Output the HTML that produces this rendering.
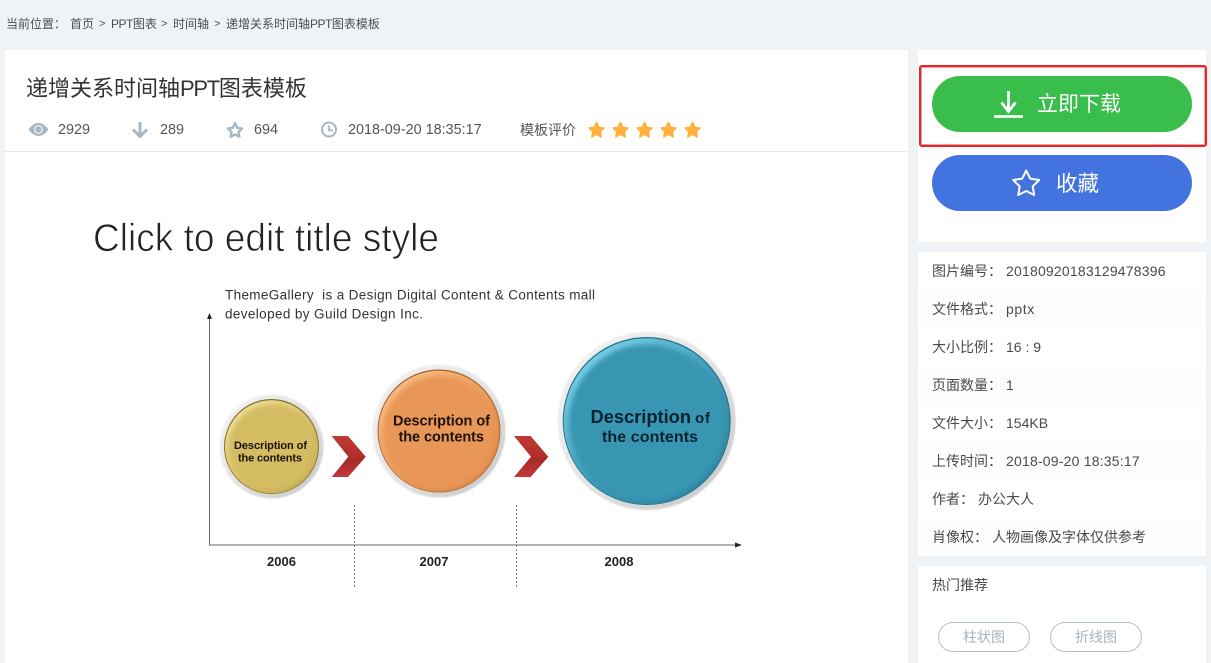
<!DOCTYPE html>
<html lang="zh"><head><meta charset="utf-8">
<style>
*{margin:0;padding:0;box-sizing:border-box}
html,body{width:1211px;height:663px;overflow:hidden;background:#eff3f6;font-family:"Liberation Sans","Noto Sans CJK SC",sans-serif;color:#444}
.a{position:absolute;white-space:nowrap}
.card{position:absolute;background:#fff}
.row{position:absolute;left:918px;width:288px;height:38px;line-height:38px;font-size:14px;color:#4a4a4a;white-space:nowrap}
.row span{position:absolute;top:0}
.tag{position:absolute;top:622px;width:92px;height:30px;border:1px solid #b4c2ca;border-radius:15px;text-align:center;line-height:28px;font-size:14px;color:#a9b3b9}
.bc{top:16px;font-size:12px;line-height:16px;color:#4d4d4d}
.m{top:119.500px;font-size:14.400px;line-height:20px;color:#555}
.n{letter-spacing:-.5px}
</style></head><body>
<div class="a bc" style="left:6px">当前位置：</div>
<div class="a bc" style="left:70px">首页</div>
<div class="a bc" style="left:99px;font-size:11px">&gt;</div>
<div class="a bc" style="left:111px"><span class="n">PPT</span>图表</div>
<div class="a bc" style="left:161px;font-size:11px">&gt;</div>
<div class="a bc" style="left:173px">时间轴</div>
<div class="a bc" style="left:214px;font-size:11px">&gt;</div>
<div class="a bc" style="left:226px">递增关系时间轴<span class="n">PPT</span>图表模板</div>

<div class="card" style="left:5px;top:50px;width:903px;height:613px"></div>
<div class="a" style="left:26px;top:74px;font-size:22px;line-height:30px;color:#333">递增关系时间轴<span style="letter-spacing:-1.300px">PPT</span>图表模板</div>
<div class="a" style="left:5px;top:151px;width:903px;height:1px;background:#e8ebee"></div>

<svg class="a" style="left:0;top:115px" width="720" height="30" viewBox="0 115 720 30">
<path d="M28.500 129.500C32 125 35 123 38.500 123C42 123 45 125 48.500 129.500C45 134 42 136 38.500 136C35 136 32 134 28.500 129.500Z" fill="#a6b7c4"/>
<circle cx="38.500" cy="129.500" r="4.500" fill="#fff" opacity=".85"/><circle cx="38.500" cy="129.500" r="3.200" fill="#a6b7c4"/>
<path d="M140 122V136M133 129.500L140 136.500L147 129.500" fill="none" stroke="#a6b7c4" stroke-width="3"/>
<path d="M235 123L237.200 127.800L242 128.500L238.500 132L239.400 136.800L235 134.500L230.600 136.800L231.500 132L228 128.500L232.800 127.800Z" fill="none" stroke="#a6b7c4" stroke-width="2.400" stroke-linejoin="round"/>
<circle cx="329" cy="129.500" r="7" fill="none" stroke="#a6b7c4" stroke-width="2"/>
<path d="M329 125.500V130.400H333" fill="none" stroke="#a6b7c4" stroke-width="1.800"/>
<g fill="#ffb03b" stroke="#ffb03b" stroke-width="1.600" stroke-linejoin="round">
<path d="M596.500 122.500L598.800 127.400L603.800 128L600.100 131.600L601.200 136.800L596.500 134.200L591.800 136.800L592.900 131.600L589.200 128L594.200 127.400Z"/>
<path transform="translate(24 0)" d="M596.500 122.500L598.800 127.400L603.800 128L600.100 131.600L601.200 136.800L596.500 134.200L591.800 136.800L592.900 131.600L589.200 128L594.200 127.400Z"/>
<path transform="translate(48 0)" d="M596.500 122.500L598.800 127.400L603.800 128L600.100 131.600L601.200 136.800L596.500 134.200L591.800 136.800L592.900 131.600L589.200 128L594.200 127.400Z"/>
<path transform="translate(72 0)" d="M596.500 122.500L598.800 127.400L603.800 128L600.100 131.600L601.200 136.800L596.500 134.200L591.800 136.800L592.900 131.600L589.200 128L594.200 127.400Z"/>
<path transform="translate(96 0)" d="M596.500 122.500L598.800 127.400L603.800 128L600.100 131.600L601.200 136.800L596.500 134.200L591.800 136.800L592.900 131.600L589.200 128L594.200 127.400Z"/>
</g></svg>
<div class="a m" style="left:58px">2929</div>
<div class="a m" style="left:160px">289</div>
<div class="a m" style="left:254px">694</div>
<div class="a m" style="left:348px">2018-09-20 18:35:17</div>
<div class="a" style="left:520px;top:120px;font-size:14px;line-height:20px;color:#555">模板评价</div>

<svg class="a" style="left:0;top:0" width="908" height="663" viewBox="0 0 908 663" font-family="Liberation Sans, sans-serif">
<defs>
<filter id="bl" x="-20%" y="-20%" width="140%" height="140%"><feGaussianBlur stdDeviation="2.500"/></filter>
<filter id="bs" x="-20%" y="-20%" width="140%" height="140%"><feGaussianBlur stdDeviation=".8"/></filter>
<linearGradient id="ring" x1="0" y1="0" x2="1" y2="1"><stop offset="0" stop-color="#f4f4f4"/><stop offset=".55" stop-color="#e2e2e2"/><stop offset="1" stop-color="#c4c4c4"/></linearGradient>
<linearGradient id="yc" x1=".15" y1=".1" x2=".85" y2=".9"><stop offset="0" stop-color="#f0e096"/><stop offset=".55" stop-color="#d6bf68"/><stop offset="1" stop-color="#c4ab52"/></linearGradient>
<linearGradient id="oc" x1=".15" y1=".1" x2=".85" y2=".9"><stop offset="0" stop-color="#f9bd84"/><stop offset=".55" stop-color="#ea9a5a"/><stop offset="1" stop-color="#d98443"/></linearGradient>
<linearGradient id="bc" x1=".15" y1=".1" x2=".85" y2=".9"><stop offset="0" stop-color="#79d0e8"/><stop offset=".55" stop-color="#3e9ab7"/><stop offset="1" stop-color="#2d84a0"/></linearGradient>
<linearGradient id="chev" x1="0" y1="0" x2="0" y2="1"><stop offset="0" stop-color="#bf3a32"/><stop offset=".5" stop-color="#b22e2a"/><stop offset=".55" stop-color="#a42a28"/><stop offset="1" stop-color="#c4373a"/></linearGradient>
</defs>
<text x="93" y="251" font-size="38.500" fill="#222" stroke="#fff" stroke-width=".8" textLength="346" lengthAdjust="spacingAndGlyphs">Click to edit title style</text>
<text x="225" y="299.500" font-size="13.500" fill="#333" textLength="370" xml:space="preserve">ThemeGallery  is a Design Digital Content &amp; Contents mall</text>
<text x="225" y="318.500" font-size="13.500" fill="#333" textLength="198">developed by Guild Design Inc.</text>

<path d="M209.500 316V545H738" fill="none" stroke="#666" stroke-width="1"/>
<path d="M209.500 313L212 319H207Z" fill="#222"/><path d="M742 545L735 542.500V547.500Z" fill="#222"/>
<path d="M354.500 505V589M516.500 505V589" stroke="#777" stroke-width="1" stroke-dasharray="2 2"/>

<circle cx="271.500" cy="446.500" r="52" fill="url(#ring)" filter="url(#bs)"/>
<circle cx="271.500" cy="446.500" r="47.500" fill="#85722f"/><circle cx="271.500" cy="446.800" r="46.500" fill="url(#yc)"/><circle cx="271.800" cy="447.500" r="43" fill="#d4bc63" filter="url(#bl)"/>

<circle cx="439" cy="431" r="66.500" fill="url(#ring)" filter="url(#bs)"/>
<circle cx="439" cy="431" r="61.500" fill="#a9652f"/><circle cx="439" cy="431.300" r="60.500" fill="url(#oc)"/><circle cx="439.300" cy="432.500" r="56.500" fill="#e99759" filter="url(#bl)"/>

<circle cx="646.700" cy="421" r="89" fill="url(#ring)" filter="url(#bs)"/>
<circle cx="646.700" cy="421" r="84" fill="#226f87"/><circle cx="646.700" cy="421.300" r="83" fill="url(#bc)"/><circle cx="647" cy="422.500" r="78" fill="#3996b3" filter="url(#bl)"/>

<path d="M331.700 436H348L365.700 456.700L348 477H331.700L348.300 456.700Z" fill="url(#chev)"/>
<path d="M514 436H530.700L548.300 456.700L530.700 477H514L531 456.700Z" fill="url(#chev)"/>

<g font-weight="700" fill="#1c1208">
<text x="234" y="449" font-size="11" textLength="73">Description of</text>
<text x="238" y="461.500" font-size="11" textLength="64">the contents</text>
<text x="393" y="425.500" font-size="14.500" textLength="97">Description of</text>
<text x="398.500" y="441.500" font-size="14.500" textLength="85.500">the contents</text>
</g>
<g font-weight="700" fill="#06222e">
<text x="590.500" y="423" font-size="18.300" textLength="100.500">Description</text>
<text x="695" y="423" font-size="15" textLength="15">of</text>
<text x="602" y="442" font-size="16" textLength="96">the contents</text>
</g>
<g font-weight="700" fill="#222" font-size="13" text-anchor="middle">
<text x="281.500" y="566">2006</text><text x="434" y="566">2007</text><text x="619" y="566">2008</text>
</g>
</svg>

<div class="card" style="left:918px;top:50px;width:288px;height:192px"></div>
<div class="a" style="left:919px;top:65px;width:288px;height:82px;border:2px solid #e8262a;border-radius:3px;box-shadow:inset 0 0 0 1px rgba(232,38,42,.45)"></div>
<div class="a" style="left:932px;top:76px;width:260px;height:56px;border-radius:28px;background:#39bd4b"></div>
<div class="a" style="left:932px;top:155px;width:260px;height:56px;border-radius:28px;background:#4373de"></div>
<svg class="a" style="left:932px;top:76px" width="260" height="135" viewBox="932 76 260 135">
<path d="M1008.500 91V111.500M1001.500 102.500L1008.500 111.500L1015.500 102.500" fill="none" stroke="#fff" stroke-width="2.800"/>
<rect x="994" y="115.200" width="29" height="2.600" fill="#fff"/>
<path d="M1026.200 170.500L1030.200 178.600L1039.200 180L1032.700 186.300L1034.200 195L1026.200 191L1018.200 195L1019.700 186.300L1013.200 180L1022.200 178.600Z" fill="none" stroke="#fff" stroke-width="2" stroke-linejoin="round"/>
</svg>
<div class="a" style="left:1037px;top:90px;font-size:21px;line-height:30px;color:#fff">立即下载</div>
<div class="a" style="left:1056px;top:169px;font-size:21.500px;line-height:30px;color:#fff">收藏</div>

<div class="card" style="left:918px;top:252px;width:288px;height:304px"></div>
<div class="row" style="top:252px"><span style="left:14px">图片编号：</span><span style="left:88px;letter-spacing:.2px">20180920183129478396</span></div>
<div class="row" style="top:290px;background:#fdfdfd"><span style="left:14px">文件格式：</span><span style="left:88px;letter-spacing:.6px">pptx</span></div>
<div class="row" style="top:328px"><span style="left:14px">大小比例：</span><span style="left:88px">16 : 9</span></div>
<div class="row" style="top:366px;background:#fdfdfd"><span style="left:14px">页面数量：</span><span style="left:88px">1</span></div>
<div class="row" style="top:404px"><span style="left:14px">文件大小：</span><span style="left:88px">154KB</span></div>
<div class="row" style="top:442px;background:#fdfdfd"><span style="left:14px">上传时间：</span><span style="left:88px;letter-spacing:.2px">2018-09-20 18:35:17</span></div>
<div class="row" style="top:480px"><span style="left:14px">作者：</span><span style="left:60px">办公大人</span></div>
<div class="row" style="top:518px;background:#fdfdfd"><span style="left:14px">肖像权：</span><span style="left:74px">人物画像及字体仅供参考</span></div>

<div class="card" style="left:918px;top:566px;width:288px;height:97px"></div>
<div class="a" style="left:932px;top:575px;font-size:14px;line-height:20px;color:#4a4a4a">热门推荐</div>
<div class="tag" style="left:938px">柱状图</div>
<div class="tag" style="left:1050px">折线图</div>
</body></html>
